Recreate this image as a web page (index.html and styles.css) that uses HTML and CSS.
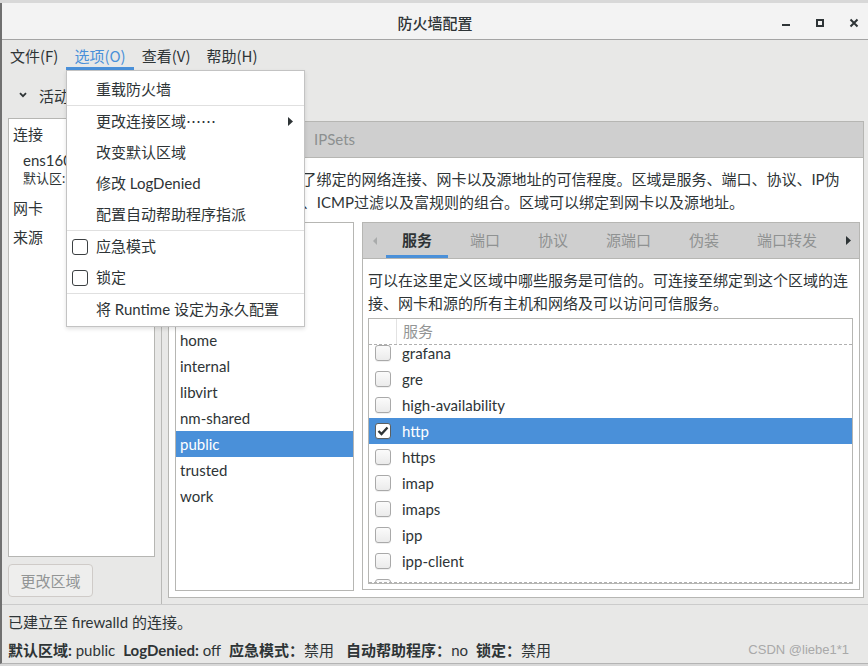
FILE: index.html
```html
<!DOCTYPE html>
<html lang="zh-CN">
<head>
<meta charset="utf-8">
<title>防火墙配置</title>
<link rel="stylesheet" href="styles.css">
</head>
<body>
<div class="window">
  <header class="titlebar">
    <div class="tb-side"></div>
    <div class="title">防火墙配置</div>
    <div class="tb-side controls">
      <span class="ctl"><svg width="28" height="36" viewBox="0 0 28 36"><rect x="10" y="20" width="8" height="2" fill="#2e3436"/></svg></span>
      <span class="ctl"><svg width="28" height="36" viewBox="0 0 28 36"><rect x="11" y="16" width="6" height="6" fill="none" stroke="#2e3436" stroke-width="2"/></svg></span>
      <span class="ctl"><svg width="28" height="36" viewBox="0 0 28 36"><path d="M10.5 15.5 L17.5 22.5 M17.5 15.5 L10.5 22.5" stroke="#2e3436" stroke-width="2"/></svg></span>
    </div>
  </header>

  <nav class="menubar">
    <span class="mb-item">文件(F)</span>
    <span class="mb-item open">选项(O)</span>
    <span class="mb-item">查看(V)</span>
    <span class="mb-item">帮助(H)</span>
  </nav>

  <main class="main">
    <aside class="left">
      <div class="expander">
        <svg class="chev" width="8" height="6" viewBox="0 0 8 6"><path d="M1 1.2 L4 4.2 L7 1.2" fill="none" stroke="#2e3436" stroke-width="1.8"/></svg>
        <span>活动绑定</span>
      </div>
      <div class="bindings">
        <div class="b-head">连接</div>
        <div class="b-conn">ens160</div>
        <div class="b-zone">默认区: public</div>
        <div class="b-head nic">网卡</div>
        <div class="b-head src">来源</div>
      </div>
      <button class="btn" disabled>更改区域</button>
    </aside>

    <section class="right">
      <div class="notebook top-nb">
        <div class="nb-header">
          <span class="top-tab active">区域</span>
          <span class="top-tab">服务</span>
          <span class="top-tab">IPSets</span>
        </div>
        <div class="nb-content">
          <p class="desc">FirewallD 区域定义了绑定的网络连接、网卡以及源地址的可信程度。区域是服务、端口、协议、IP伪<br>装、端口/报文转发、ICMP过滤以及富规则的组合。区域可以绑定到网卡以及源地址。</p>
          <div class="zone-split">
            <ul class="zone-list">
              <li>block</li>
              <li>dmz</li>
              <li>drop</li>
              <li>external</li>
              <li>home</li>
              <li>internal</li>
              <li>libvirt</li>
              <li>nm-shared</li>
              <li class="sel">public</li>
              <li>trusted</li>
              <li>work</li>
            </ul>

            <div class="notebook svc-nb">
              <div class="svc-header">
                <span class="arrow-btn left-arrow"><svg width="4" height="8" viewBox="0 0 4 8"><polygon points="4,0 0,4 4,8" fill="#a9abab"/></svg></span>
                <div class="svc-tabs">
                  <span class="svc-tab active">服务</span>
                  <span class="svc-tab">端口</span>
                  <span class="svc-tab">协议</span>
                  <span class="svc-tab">源端口</span>
                  <span class="svc-tab">伪装</span>
                  <span class="svc-tab">端口转发</span>
                </div>
                <span class="arrow-btn right-arrow"><svg width="5" height="9" viewBox="0 0 5 9"><polygon points="0,0 5,4.5 0,9" fill="#2e3436"/></svg></span>
              </div>
              <div class="svc-content">
                <p class="desc">可以在这里定义区域中哪些服务是可信的。可连接至绑定到这个区域的连<br>接、网卡和源的所有主机和网络及可以访问可信服务。</p>
                <div class="table">
                  <div class="thead">
                    <span class="th-check"></span>
                    <span class="th-name">服务</span>
                  </div>
                  <div class="tbody">
                    <div class="row first"><span class="cb"></span><span class="name">grafana</span></div>
                    <div class="row"><span class="cb"></span><span class="name">gre</span></div>
                    <div class="row"><span class="cb"></span><span class="name">high-availability</span></div>
                    <div class="row sel"><span class="cb checked"><svg width="14" height="14" viewBox="0 0 14 14"><path d="M2.5 7 L5.5 10 L11.5 3.5" fill="none" stroke="#2e3436" stroke-width="2.4"/></svg></span><span class="name">http</span></div>
                    <div class="row"><span class="cb"></span><span class="name">https</span></div>
                    <div class="row"><span class="cb"></span><span class="name">imap</span></div>
                    <div class="row"><span class="cb"></span><span class="name">imaps</span></div>
                    <div class="row"><span class="cb"></span><span class="name">ipp</span></div>
                    <div class="row"><span class="cb"></span><span class="name">ipp-client</span></div>
                    <div class="row"><span class="cb"></span><span class="name">ipsec</span></div>
                  </div>
                </div>
              </div>
            </div>
          </div>
        </div>
      </div>
    </section>
  </main>

  <footer class="status">
    <div class="st-line">已建立至 firewalld 的连接。</div>
    <div class="st-line st-info">
      <span class="pair"><b>默认区域:</b> public</span>
      <span class="pair"><b>LogDenied:</b> off</span>
      <span class="pair wide"><b>应急模式：</b>禁用</span>
      <span class="pair"><b>自动帮助程序：</b>no</span>
      <span class="pair"><b>锁定：</b>禁用</span>
      <span class="watermark">CSDN @liebe1*1</span>
    </div>
  </footer>

  <div class="dropdown">
    <div class="dd-item">重载防火墙</div>
    <div class="dd-sep"></div>
    <div class="dd-item">更改连接区域<span class="cjk">……</span><svg class="dd-arrow" width="5" height="9" viewBox="0 0 5 9"><polygon points="0,0 5,4.5 0,9" fill="#2e3436"/></svg></div>
    <div class="dd-item">改变默认区域</div>
    <div class="dd-item">修改 LogDenied</div>
    <div class="dd-item">配置自动帮助程序指派</div>
    <div class="dd-sep"></div>
    <div class="dd-item check"><span class="dd-cb"></span>应急模式</div>
    <div class="dd-item check"><span class="dd-cb"></span>锁定</div>
    <div class="dd-sep"></div>
    <div class="dd-item">将 Runtime 设定为永久配置</div>
  </div>
</div>
</body>
</html>
```

FILE: styles.css
```css
* { box-sizing: border-box; margin: 0; padding: 0; }

html, body { width: 868px; height: 666px; overflow: hidden; }

body {
  background: #d8d8d8;
  font-family: Lato, "Noto Sans CJK SC", sans-serif;
  font-size: 15px;
  color: #2e3436;
}

.cjk { font-family: "Noto Sans CJK SC", sans-serif; }

.window {
  position: relative;
  margin-top: 3px;
  width: 868px;
  height: 661px;
  border-left: 2px solid #707070;
  border-bottom: 1px solid #b4b4b4;
  background: #e8e8e7;
  display: flex;
  flex-direction: column;
}

/* title bar */
.titlebar {
  height: 37px;
  flex: none;
  background: #f3f3f3;
  border-bottom: 1px solid #a4a4a4;
  display: grid;
  grid-template-columns: 1fr auto 1fr;
  align-items: center;
}
.title {
  font-size: 15px;
  font-weight: 500;
  line-height: 36px;
  padding-top: 2px;
  color: #2e3436;
}
.controls { display: flex; justify-content: flex-end; gap: 6px; }
.ctl { display: block; width: 28px; height: 36px; }
.ctl svg { display: block; }

/* menu bar */
.menubar {
  height: 30px;
  flex: none;
  display: flex;
  background: #e8e8e7;
  font-family: "Noto Sans CJK SC", sans-serif;
}
.mb-item {
  padding: 2px 8px 0;
  line-height: 28px;
  height: 30px;
}
.mb-item.open {
  color: #4a90d9;
  box-shadow: inset 0 -3px 0 #4a90d9;
}

/* main */
.main {
  height: 534px;
  flex: none;
  display: flex;
}

.left {
  width: 160px;
  flex: none;
  border-right: 1px solid #b9b9b7;
  padding: 8px 6px 7px;
  display: flex;
  flex-direction: column;
}
.expander {
  height: 34px;
  display: flex;
  align-items: center;
  padding-left: 11px;
  white-space: nowrap;
}
.chev { margin-right: 12px; }
.bindings {
  flex: 1;
  margin-top: 6px;
  background: #fff;
  border: 1px solid #b6b6b3;
  padding: 3px 4px;
  overflow: hidden;
  white-space: nowrap;
}
.b-head { height: 24px; line-height: 24px; }
.b-conn { margin-top: 2px; margin-left: 10px; height: 24px; line-height: 24px; }
.b-zone { margin-left: 10px; height: 12px; line-height: 12px; font-size: 13px; }
.b-head.nic { margin-top: 12px; }
.b-head.src { margin-top: 5px; }

.btn {
  margin-top: 7px;
  width: 85px;
  height: 33px;
  flex: none;
  border: 1px solid #cfcbc8;
  border-radius: 4px;
  background: #eeeeed;
  color: #929595;
  font-family: inherit;
  font-size: 15px;
}

.right {
  flex: 1;
  padding: 51px 4px 6px 6px;
  display: flex;
}

.notebook {
  border: 1px solid #b6b6b3;
  background: #fff;
  display: flex;
  flex-direction: column;
  min-height: 0;
}
.top-nb { flex: 1; }

.nb-header {
  height: 36px;
  flex: none;
  background: #cfcfcf;
  border-bottom: 1px solid #b6b6b3;
  display: flex;
}
.top-tab {
  padding: 0 17px;
  line-height: 35px;
  color: #8c8f8f;
  white-space: nowrap;
}
.top-tab.active {
  font-weight: bold;
  color: #2e3436;
  box-shadow: inset 0 -3px 0 #4a90d9;
}

.nb-content {
  flex: 1;
  min-height: 0;
  padding: 10px 3px 6px 6px;
  display: flex;
  flex-direction: column;
}
.desc {
  line-height: 23px;
  white-space: nowrap;
}
.nb-content > .desc { margin-bottom: 8px; }

.zone-split {
  height: 369px;
  flex: none;
  display: flex;
  gap: 8px;
  align-items: flex-start;
}
.zone-list {
  width: 179px;
  height: 369px;
  border: 1px solid #b6b6b3;
  list-style: none;
  overflow: hidden;
}
.zone-list li {
  height: 26px;
  line-height: 26px;
  padding-left: 4px;
}
.zone-list li.sel { background: #4a90d9; color: #fff; }

.svc-nb { width: 498px; height: 368px; overflow: hidden; }
.svc-header {
  height: 36px;
  flex: none;
  background: #cfcfcf;
  border-bottom: 1px solid #b6b6b3;
  display: flex;
  overflow: hidden;
}
.arrow-btn {
  flex: none;
  display: flex;
  align-items: center;
  justify-content: center;
}
.left-arrow { width: 20px; padding-left: 4px; }
.right-arrow { width: 22px; margin-left: auto; }
.svc-tabs {
  flex: 1;
  display: flex;
  overflow: hidden;
}
.svc-tab {
  flex: none;
  margin: 0 3px;
  padding: 0 16px;
  line-height: 35px;
  color: #8f9292;
  white-space: nowrap;
}
.svc-tab.active {
  font-weight: bold;
  color: #2e3436;
  box-shadow: inset 0 -3px 0 #4a90d9;
}

.svc-content {
  flex: 1;
  min-height: 0;
  overflow: hidden;
  padding: 10px 6px 5px 5px;
  display: flex;
  flex-direction: column;
}
.table {
  margin-top: 3px;
  flex: 1;
  min-height: 0;
  border: 1px solid #b6b6b3;
  display: flex;
  flex-direction: column;
  overflow: hidden;
}
.thead {
  height: 25px;
  flex: none;
  display: flex;
}
.th-check { width: 28px; border-right: 1px solid #e2e2e2; }
.th-name { padding-left: 6px; line-height: 25px; color: #939595; }
.tbody {
  flex: 1;
  min-height: 0;
  overflow: hidden;
  border-top: 1px dashed #b0b0b0;
  border-bottom: 1px dashed #b0b0b0;
}
.row {
  height: 26px;
  display: flex;
  align-items: center;
  padding-left: 6px;
}
.row.first { margin-top: -5px; }
.row.sel { background: #4a90d9; color: #fff; }
.cb {
  width: 16px;
  height: 16px;
  flex: none;
  border: 1px solid #a9a9a9;
  border-radius: 3px;
  background: linear-gradient(#fbfbfb, #ebebeb);
  box-shadow: 0 1px 0 rgba(0,0,0,0.06);
  display: flex;
  align-items: center;
  justify-content: center;
}
.cb.checked { background: #fff; border-color: #5b5f60; }
.name { margin-left: 11px; line-height: 26px; white-space: nowrap; }

/* status bar */
.status {
  height: 59px;
  flex: none;
  border-top: 1px solid #cbcbcb;
  padding: 6px 6px 0;
  background: #e8e8e7;
}
.st-line { line-height: 22px; height: 22px; white-space: nowrap; }
.st-info { margin-top: 6px; display: flex; }
.pair { margin-right: 8px; }
.pair.wide { margin-right: 12px; }
.pair b { font-weight: bold; }
.watermark {
  margin-left: auto;
  margin-right: 13px;
  font-family: "Liberation Sans", Arial, sans-serif;
  font-size: 13px;
  color: #a9a9a9;
}

/* dropdown menu (overlay) */
.dropdown {
  position: absolute;
  left: 64px;
  top: 67px;
  width: 239px;
  background: #fff;
  border: 1px solid #c3c3c3;
  padding: 3px 0 1px;
  box-shadow: 0 2px 4px rgba(0,0,0,0.12);
}
.dd-item {
  height: 31px;
  line-height: 31px;
  padding-left: 29px;
  display: flex;
  align-items: center;
  white-space: nowrap;
}
.dd-sep { height: 1px; background: #e0e0e0; }
.dd-arrow { margin-left: auto; margin-right: 11px; }
.dd-cb {
  width: 16px;
  height: 16px;
  margin-left: -24px;
  margin-right: 8px;
  border: 1px solid #3c4042;
  border-radius: 3px;
  background: #fff;
}
```
